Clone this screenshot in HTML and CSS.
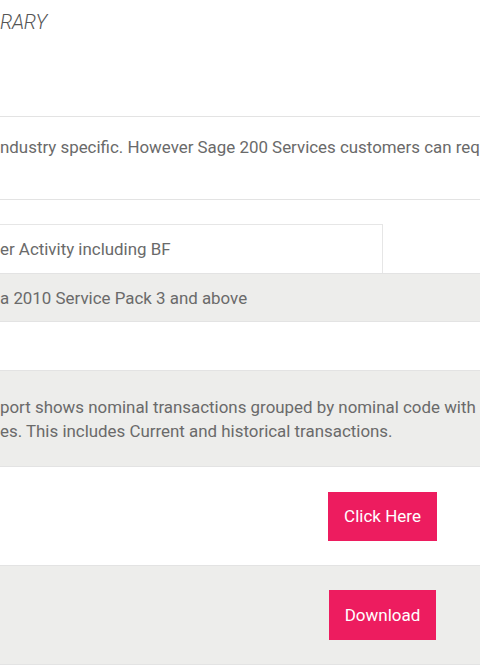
FILE: index.html
```html
<!DOCTYPE html>
<html>
<head>
<meta charset="utf-8">
<link rel="stylesheet" href="styles.css">
</head>
<body>
<div class="page">
  <header class="head"><h1 class="title">RARY</h1></header>
  <section class="intro"><p>ndustry specific. However Sage 200 Services customers can requ</p></section>
  <section class="detail">
    <div class="name-box">er Activity including BF</div>
    <div class="row gray single">a 2010 Service Pack 3 and above</div>
    <div class="row spacer"></div>
    <div class="row gray desc">
      <p>port shows nominal transactions grouped by nominal code with D</p>
      <p>es. This includes Current and historical transactions.</p>
    </div>
    <div class="row action">
      <a class="btn btn-click" href="#">Click Here</a>
    </div>
    <div class="row gray action">
      <a class="btn btn-dl" href="#">Download</a>
    </div>
  </section>
</div>
</body>
</html>
```

FILE: styles.css
```css
html, body {
  margin: 0;
  padding: 0;
  background: #ffffff;
  overflow: hidden;
}
.page {
  width: 480px;
  font-family: Roboto, "Liberation Sans", Arial, sans-serif;
  color: #6a6a6a;
  font-size: 16.9px;
  overflow: hidden;
  white-space: nowrap;
}
.head {
  height: 116px;
  border-bottom: 1px solid #e3e3e3;
}
.title {
  margin: 0;
  padding-top: 10px;
  font-size: 20px;
  line-height: 24px;
  font-weight: 300;
  font-style: italic;
  color: #555555;
  letter-spacing: -0.3px;
}
.intro {
  height: 82px;
  border-bottom: 1px solid #e3e3e3;
}
.intro p {
  margin: 0;
  padding-top: 18px;
  line-height: 24px;
}
.detail {
  padding-top: 24px;
}
.name-box {
  width: 383px;
  height: 49px;
  box-sizing: border-box;
  border-top: 1px solid #e6e6e6;
  border-right: 1px solid #e6e6e6;
  line-height: 48px;
}
.row {
  box-sizing: border-box;
}
.gray {
  background: #ededeb;
}
.single {
  height: 49px;
  line-height: 48px;
  border-top: 1px solid #e3e3e3;
  border-bottom: 1px solid #e3e3e3;
}
.spacer {
  height: 48px;
}
.desc {
  height: 97px;
  border-top: 1px solid #e3e3e3;
  border-bottom: 1px solid #e3e3e3;
  padding-top: 24px;
}
.desc p {
  margin: 0;
  line-height: 24px;
}
.action {
  height: 99px;
  display: grid;
  grid-template-columns: 328px auto;
  align-items: center;
  border-bottom: 1px solid #e3e3e3;
}
.action .btn {
  grid-column: 2;
  justify-self: start;
}
.btn {
  display: inline-block;
  background: #ed1c5f;
  color: #ffffff;
  text-decoration: none;
  font-size: 17px;
  font-weight: 400;
  line-height: 49px;
  height: 49px;
  box-sizing: border-box;
}
.btn-click {
  width: 109px;
  text-align: center;
}
.btn-dl {
  width: 107px;
  height: 50px;
  line-height: 50px;
  text-align: center;
  margin-left: 1px;
}
```
